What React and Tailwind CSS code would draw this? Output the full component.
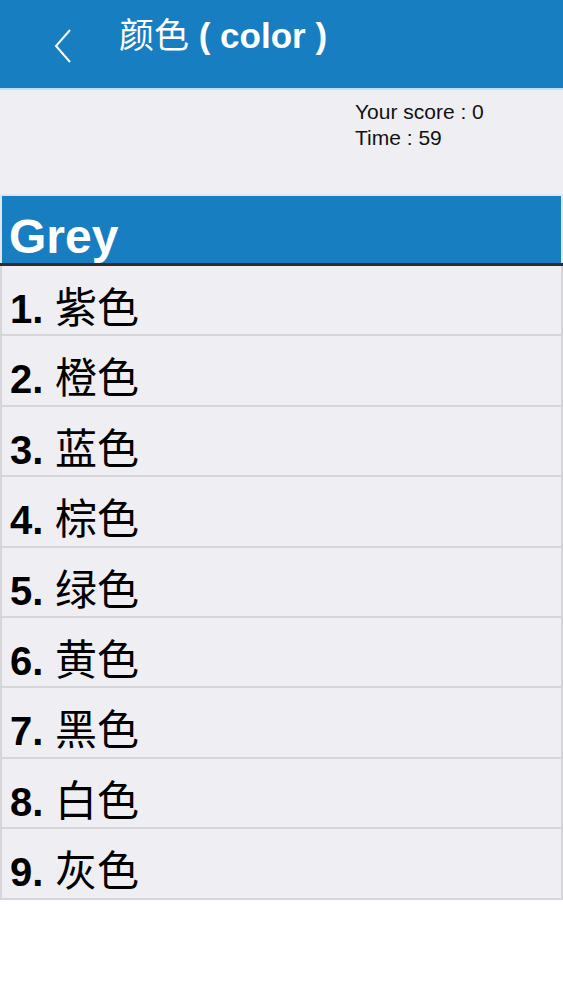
export default function App() {
  const items = ["紫色", "橙色", "蓝色", "棕色", "绿色", "黄色", "黑色", "白色", "灰色"];
  const font = { fontFamily: '"Liberation Sans", "Noto Sans CJK SC", sans-serif' };
  return (
    <div className="w-[563px] h-[1000px] bg-white" style={font}>
      <div className="h-[88px] bg-[#177ec1] flex items-start">
        <div className="w-[119px] flex justify-center pt-[28px] pl-[6px]">
          <svg width="20" height="36" viewBox="0 0 20 36" fill="none">
            <path d="M17 2 L3 18 L17 34" stroke="white" strokeWidth="2" strokeLinejoin="miter" />
          </svg>
        </div>
        <div className="pt-[12px] text-white text-[35px] leading-[48px] flex items-baseline whitespace-pre">
          <span className="font-normal">颜色</span>
          <span className="font-bold">{" ( color )"}</span>
        </div>
      </div>
      <div className="h-[2px] bg-[#b9e2f6]" />
      <div className="h-[104px] bg-[#efeef3] pl-[355px] pt-[9px] text-[21px] leading-[26px] text-[#111]">
        <div>Your score : 0</div>
        <div>Time : 59</div>
      </div>
      <div className="bg-[#efeef3] border-2 border-[#e2e6ec] border-b-0">
        <div className="h-[67px] bg-[#177ec1] text-white font-bold text-[48px] leading-[54px] pl-[7px] pt-[14px] overflow-hidden">
          Grey
        </div>
      </div>
      <div className="h-[3px] bg-[#2d2d30]" />
      <div className="flex flex-col">
        {items.map((t, i) => (
          <div
            key={i}
            className="h-[70.4px] bg-[#efeef3] border-x-2 border-b-2 border-[#d6d5d9] pl-[8px] pt-[19px] text-black leading-[48px] whitespace-pre overflow-hidden"
          >
            <div className="flex items-baseline h-[48px]">
              <span className="font-bold text-[40px]">{i + 1}.</span>
              <span className="font-normal text-[42px]">{" " + t}</span>
            </div>
          </div>
        ))}
      </div>
    </div>
  );
}
